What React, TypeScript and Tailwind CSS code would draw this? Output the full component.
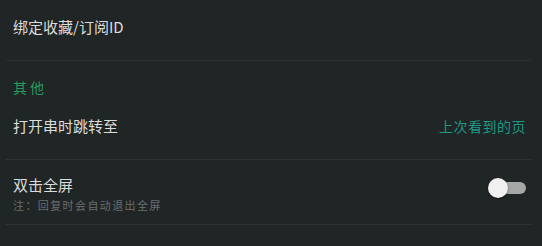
export default function App() {
  const font = { fontFamily: '"Noto Sans CJK SC", "Noto Sans", sans-serif' };
  return (
    <div className="w-[542px] h-[246px] overflow-hidden bg-[#202526] pl-[6px] pr-[11px]" style={font}>
      {/* 绑定 */}
      <div className="h-[61px] flex items-start pt-[16px] pl-[7px] border-b border-[#2c3132]">
        <span className="text-[15px] leading-[22px] text-[#dcdcdc]">绑定收藏/订阅ID</span>
      </div>

      {/* 其他 */}
      <div className="h-[36px] flex items-end pl-[7px]">
        <span className="text-[14px] leading-[20px] tracking-[3px] text-[#2a9a5c]">其他</span>
      </div>

      <div className="h-[63px] flex items-start justify-between pt-[18px] pl-[7px] pr-[5px] border-b border-[#2e3334]">
        <span className="text-[15px] leading-[22px] text-[#dcdcdc]">打开串时跳转至</span>
        <span className="text-[14px] leading-[22px] tracking-[0.5px] text-[#1e9985]">上次看到的页</span>
      </div>

      <div className="h-[65px] flex items-start justify-between pt-[15px] pl-[7px] pr-[5px] border-b border-[#2e3334]">
        <div className="flex flex-col">
          <span className="text-[15px] leading-[20px] text-[#dcdcdc]">双击全屏</span>
          <span className="text-[11px] leading-[20px] tracking-[1.4px] text-[#6a6e6f]">注：回复时会自动退出全屏</span>
        </div>
        <div className="relative w-[38px] h-[20px] mt-[3px]">
          <div className="absolute left-[4px] right-0 top-[4px] h-[12px] rounded-full bg-[#a6a7a7]" />
          <div className="absolute left-0 top-0 w-[20px] h-[20px] rounded-full bg-[#f0f0f0] shadow-[0_1px_2px_rgba(0,0,0,0.5)]" />
        </div>
      </div>
    </div>
  );
}
